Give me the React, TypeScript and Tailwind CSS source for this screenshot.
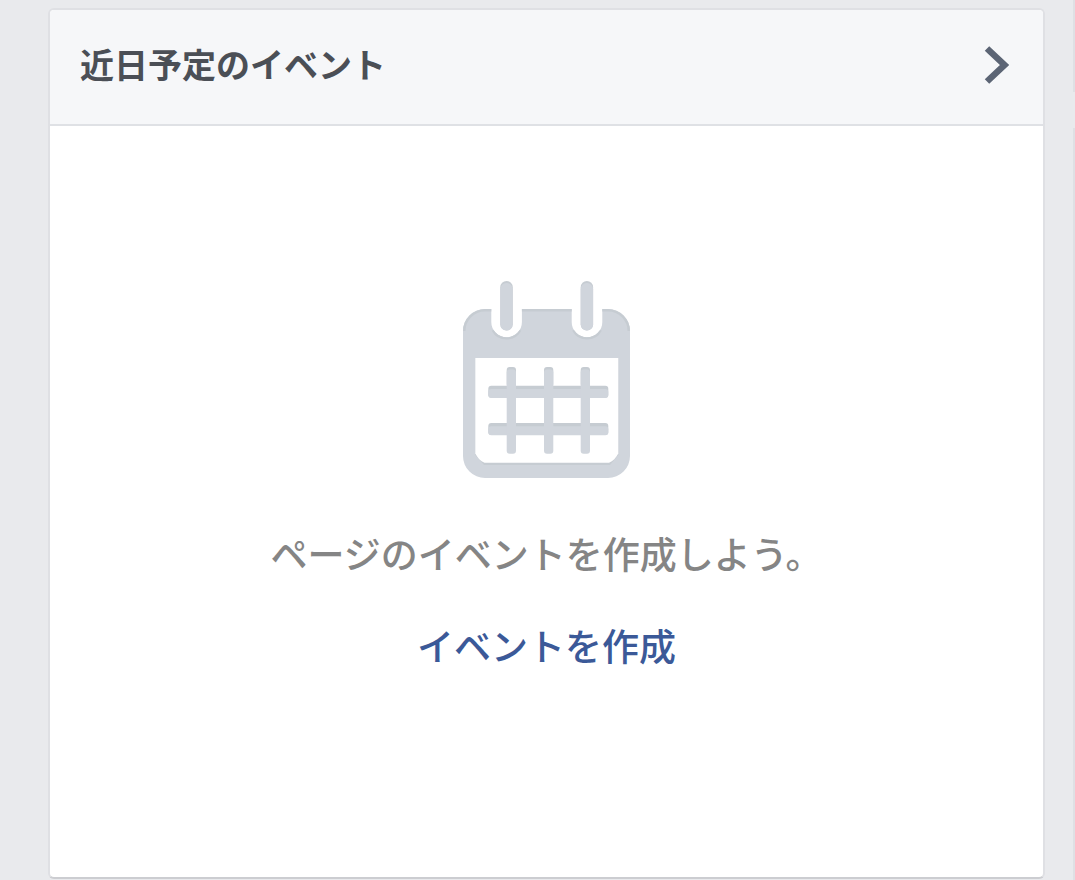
function CalendarIcon() {
  return (
    <svg viewBox="0 0 168 198" className="h-[198px] w-[168px]" aria-hidden="true">
      <defs>
        <clipPath id="calendar-body">
          <path d="M22 29H28.300V42a15.300 15.300 0 0 0 30.600 0V29H108.700V42a15.300 15.300 0 0 0 30.600 0V29H145a22 22 0 0 1 22 22V176a22 22 0 0 1 -22 22H22a22 22 0 0 1 -22 -22V51a22 22 0 0 1 22 -22Z" />
        </clipPath>
      </defs>
      <g clipPath="url(#calendar-body)">
        <rect y="28" width="168" height="170" fill="#d0d5dc" />
        <path d="M0 51A22 22 0 0 1 22 29H145A22 22 0 0 1 167 51" fill="none" stroke="#c6ccd2" strokeWidth="5" />
        <path d="M30 50a15.300 15.300 0 0 0 27 0M110.500 50a15.300 15.300 0 0 0 27 0" fill="none" stroke="#c6ccd2" strokeWidth="3" />
      </g>
      <path d="M12.300 78H155.300V175L147 185H21L12.300 175Z" fill="#c6ccd2" />
      <path d="M12.300 78H155.300V173.500C153 178 150 181 146 182.700H21.500C17.500 181 14.500 178 12.300 173.500Z" fill="#fff" />
      <g fill="#c6ccd2">
        <rect x="37.300" y="1" width="12.400" height="49.500" rx="6.200" />
        <rect x="117.700" y="1" width="12.400" height="49.500" rx="6.200" />
        <rect x="25.300" y="105.700" width="120" height="12" rx="3" />
        <rect x="25.300" y="143" width="120" height="12" rx="3" />
        <rect x="43.700" y="87" width="9.300" height="20" rx="3" />
        <rect x="81" y="87" width="9.300" height="20" rx="3" />
        <rect x="117.700" y="87" width="9.300" height="20" rx="3" />
      </g>
      <g fill="#d0d5dc">
        <rect x="37.300" y="3" width="12.400" height="47.500" rx="6.200" />
        <rect x="117.700" y="3" width="12.400" height="47.500" rx="6.200" />
        <rect x="25.300" y="109" width="120" height="9" rx="3" />
        <rect x="25.300" y="146.300" width="120" height="9" rx="3" />
        <rect x="43.700" y="89.500" width="9.300" height="84.200" rx="3" />
        <rect x="81" y="89.500" width="9.300" height="84.200" rx="3" />
        <rect x="117.700" y="89.500" width="9.300" height="84.200" rx="3" />
      </g>
    </svg>
  );
}

export default function App() {
  return (
    <div className="flex min-h-screen bg-[#e9eaed] font-['Noto_Sans_CJK_JP','Liberation_Sans',sans-serif]">
      <main className="flex min-w-0 flex-1 pt-2 pb-px pl-12">
        <section className="flex flex-1 flex-col overflow-hidden rounded-md border-2 border-[#dfe0e4] border-b-[#cccdd1] bg-white">
          <header className="flex h-[116px] items-center justify-between border-b-2 border-[#dfe1e5] bg-[#f6f7f9] pr-8 pb-1.5 pl-[30px]">
            <h1 className="text-[34px] leading-[50px] font-bold text-[#4b4f56]">近日予定のイベント</h1>
            <button type="button" aria-label="近日予定のイベントを表示" className="cursor-pointer">
              <svg viewBox="0 0 28 40" className="h-10 w-7" fill="none" stroke="#5c6575" strokeWidth="6.500" aria-hidden="true">
                <path d="M4 4.500L21.500 21L4 37.500" />
              </svg>
            </button>
          </header>
          <div className="flex flex-1 flex-col items-center pt-[154px]">
            <CalendarIcon />
            <p className="mt-12 text-[37px] leading-[54px] font-medium text-[#858585]">ページのイベントを作成しよう。</p>
            <a href="#create-event" className="mt-[38px] text-[37px] leading-[54px] font-medium text-[#3b5998]">
              イベントを作成
            </a>
          </div>
        </section>
      </main>
      <aside className="flex w-[30px] shrink-0 flex-col items-end gap-9">
        <div className="h-[92px] w-0.5 bg-[#dfe0e4]" />
        <div className="w-0.5 flex-1 bg-[#dfe0e4]" />
      </aside>
    </div>
  );
}
